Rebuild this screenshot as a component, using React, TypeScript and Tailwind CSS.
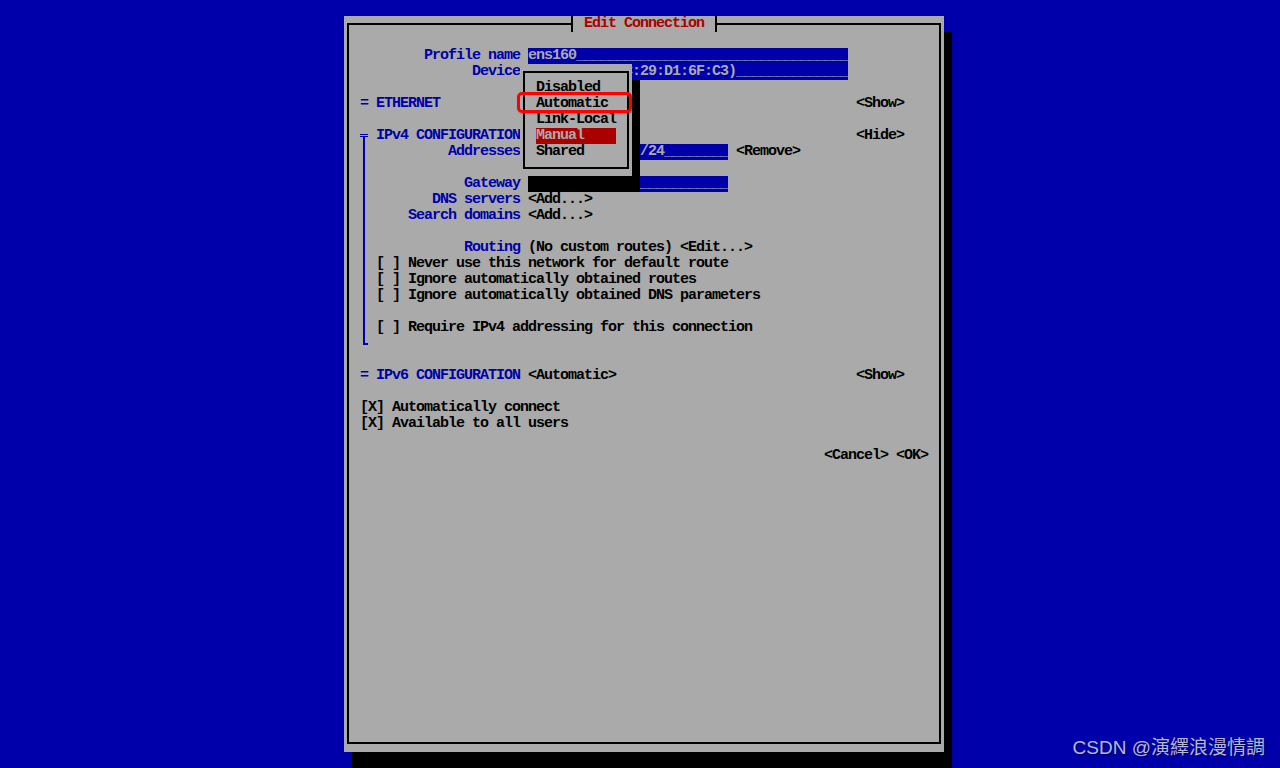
import React from 'react';

const sp = (n: number) => ' '.repeat(n);

// one 16px terminal row
function Row({ children }: { children?: React.ReactNode }) {
  return <div className="h-4 whitespace-pre">{children}</div>;
}

function Label({ children }: { children: React.ReactNode }) {
  return <span className="text-[#0000aa]">{children}</span>;
}

function Field({ text, cols }: { text: string; cols: number }) {
  const value = text + '_'.repeat(Math.max(0, cols - text.length));
  return <span className="inline-block h-4 bg-[#0000aa] text-[#aaaaaa] align-top">{value}</span>;
}

const methods = ['Disabled', 'Automatic', 'Link-Local', 'Manual', 'Shared'];

export default function App() {
  return (
    <div className="relative w-[1280px] h-[768px] overflow-hidden bg-[#0000aa] font-['Liberation_Mono',monospace] text-[15px] leading-4 tracking-[-1px] font-bold text-black">
      {/* Edit Connection dialog */}
      <div className="relative ml-[344px] mt-4 w-[600px] h-[736px] bg-[#aaaaaa] px-[3px] pt-[7px] shadow-[8px_16px_0_0_#000]">
        <div className="h-[721px] border-2 border-black pt-[23px] pl-[11px]">
          <Row>{sp(8)}<Label>Profile name</Label> <Field text="ens160" cols={40} /></Row>
          <Row>{sp(14)}<Label>Device</Label> <Field text="ens160 (00:0C:29:D1:6F:C3)" cols={40} /></Row>
          <Row />
          <Row><Label>= ETHERNET</Label>{sp(52)}&lt;Show&gt;</Row>
          <Row />

          {/* IPv4 header with tree marker; its value sits under the dropdown */}
          <div className="flex h-4">
            <div className="w-2 flex flex-col">
              <div className="mt-[6px] h-[3px] border-y border-[#0000aa]" />
              <div className="ml-[3px] h-[7px] border-l-2 border-[#0000aa]" />
            </div>
            <div className="whitespace-pre"> <Label>IPv4 CONFIGURATION</Label>{sp(42)}&lt;Hide&gt;</div>
          </div>

          <div className="flex">
            <div className="w-2">
              <div className="ml-[3px] w-[5px] h-[201px] border-l-2 border-b-2 border-[#0000aa]" />
            </div>
            <div className="flex flex-col">
              <Row>
                {sp(10)}<Label>Addresses</Label> <span className="inline-block h-4 w-[112px] bg-[#0000aa] align-top" />
                <Field text="/24" cols={11} /> &lt;Remove&gt;
              </Row>
              <Row />
              <Row>{sp(12)}<Label>Gateway</Label> <Field text="" cols={25} /></Row>
              <Row>{sp(8)}<Label>DNS servers</Label> &lt;Add...&gt;</Row>
              <Row>{sp(5)}<Label>Search domains</Label> &lt;Add...&gt;</Row>
              <Row />
              <Row>{sp(12)}<Label>Routing</Label> (No custom routes) &lt;Edit...&gt;</Row>
              <Row> [ ] Never use this network for default route</Row>
              <Row> [ ] Ignore automatically obtained routes</Row>
              <Row> [ ] Ignore automatically obtained DNS parameters</Row>
              <Row />
              <Row> [ ] Require IPv4 addressing for this connection</Row>
              <Row />
            </div>
          </div>

          <Row />
          <Row><Label>= IPv6 CONFIGURATION</Label> &lt;Automatic&gt;{sp(30)}&lt;Show&gt;</Row>
          <Row />
          <Row>[X] Automatically connect</Row>
          <Row>[X] Available to all users</Row>
          <Row />
          <Row>{sp(58)}&lt;Cancel&gt; &lt;OK&gt;</Row>
        </div>

        {/* title over the frame */}
        <div className="absolute left-[227px] top-0 h-4 w-[146px] bg-[#aaaaaa] border-x-2 border-black pl-[11px] whitespace-pre text-[#aa0000]">
          Edit Connection
        </div>

        {/* IPv4 method dropdown */}
        <div className="absolute left-[176px] top-12 w-[112px] h-[112px] bg-[#aaaaaa] px-[3px] pt-[7px] shadow-[8px_16px_0_0_#000]">
          <div className="h-[98px] border-2 border-black pt-[7px] pl-[11px]">
            {methods.map((m) => (
              <div key={m} className="h-4 whitespace-pre">
                {m === 'Manual' ? (
                  <span className="inline-block h-4 w-20 bg-[#aa0000] text-[#aaaaaa] align-top">{m}</span>
                ) : (
                  m
                )}
              </div>
            ))}
          </div>
          {/* red annotation box */}
          <div className="absolute left-[-3px] top-7 w-[115px] h-[21px] rounded-[5px] border-[3px] border-[#ff0000] shadow-[1px_1px_2px_rgba(0,0,0,0.35)]" />
        </div>
      </div>

      {/* watermark */}
      <div className="absolute right-[15px] bottom-[9px] font-['Liberation_Sans','Noto_Sans_CJK_TC',sans-serif] font-normal tracking-normal text-[19px] leading-[22px] text-[#b8b8d8] [text-shadow:1px_1px_1px_rgba(0,0,0,0.4)]">
        CSDN @演繹浪漫情調
      </div>
    </div>
  );
}
